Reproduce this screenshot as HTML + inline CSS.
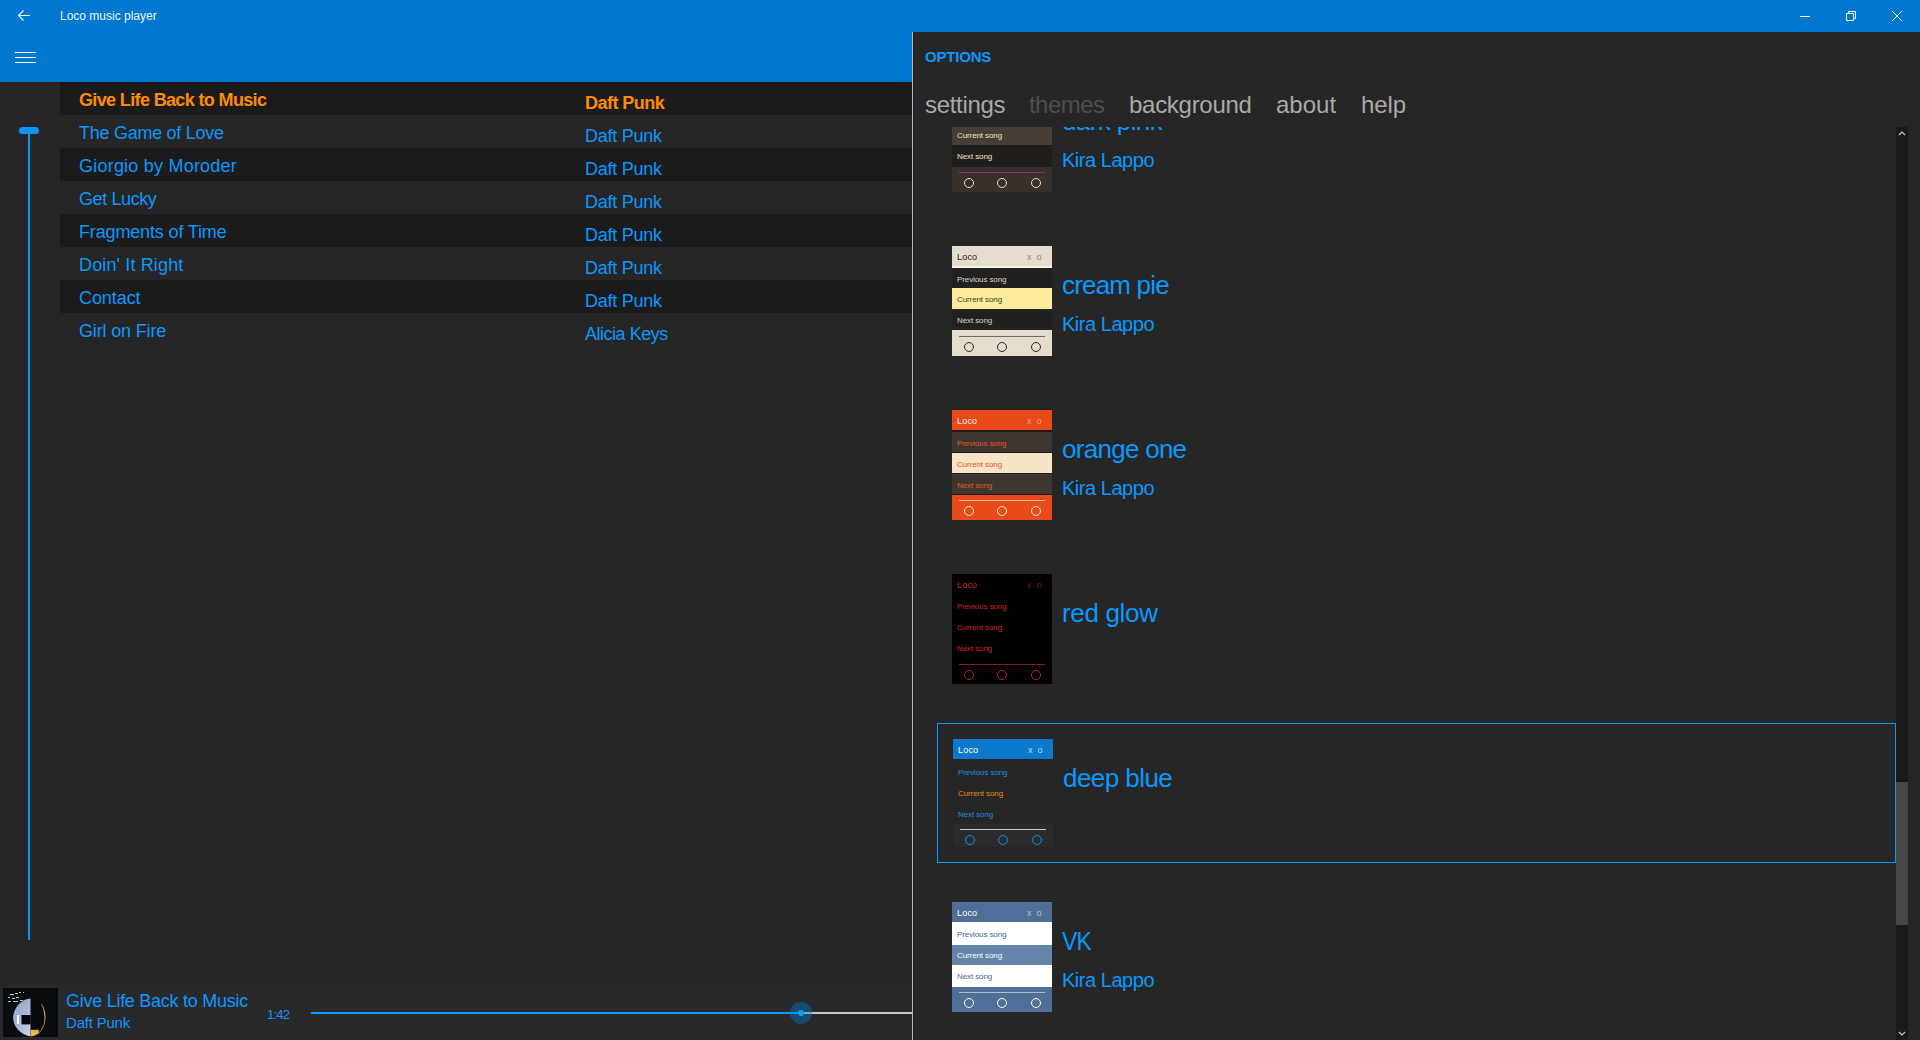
<!DOCTYPE html>
<html><head><meta charset="utf-8">
<style>
*{margin:0;padding:0;box-sizing:border-box}
html,body{width:1920px;height:1040px;overflow:hidden;background:#262626;font-family:"Liberation Sans",sans-serif}
.a{position:absolute;white-space:nowrap;line-height:1}
#tb{position:absolute;left:0;top:0;width:1920px;height:32px;background:#0078cf}
#hdr{position:absolute;left:0;top:32px;width:912px;height:50px;background:#0078cf}
.row{position:absolute;left:60px;width:852px;height:33px}
.row.dk{background:#1b1b1b}
.lt{background:#262626}
.st{position:absolute;left:19px;font-size:18px;color:#0898ff;letter-spacing:-0.4px;line-height:1}
.ar{position:absolute;left:525px;font-size:18px;color:#0898ff;letter-spacing:-0.25px;line-height:1}
.cur .st,.cur .ar{color:#ff8c00;font-weight:bold}
#bottom{position:absolute;left:0;top:985px;width:912px;height:55px;background:#29292b}
#panel{position:absolute;left:912px;top:32px;width:1008px;height:1008px;background:#262626;border-left:1px solid #b5b7c6}

#clip{position:absolute;left:913px;top:127px;width:983px;height:913px;overflow:hidden}
.th{position:absolute;width:100px;height:110px;overflow:hidden}
.th>div{position:absolute;left:0;width:100px}
.tt{top:0;height:21px}.tp{top:21px;height:21px}.tc{top:42px;height:21px}.tn{top:63px;height:21px}.tk{top:84px;height:26px}
.th span{position:absolute;line-height:1;white-space:nowrap}
.tl{left:5px;top:7px;font-size:9px;letter-spacing:0.2px}
.tx{left:75px;top:7px;font-size:9px;letter-spacing:1.2px}
.tp span,.tc span,.tn span{left:5px;top:8px;font-size:8px;letter-spacing:-0.1px}
.tk i{position:absolute;display:block}
.tk .ln{left:7px;top:6px;width:86px;height:1px}
.tk .c{top:12px;width:10px;height:10px;border-radius:50%;border:1px solid}
.c1{left:12px}.c2{left:45px}.c3{left:79px}
.ttl{position:absolute;font-size:26px;line-height:1;color:#0898ff;white-space:nowrap}
.aut{position:absolute;font-size:20px;line-height:1;color:#0898ff;white-space:nowrap;letter-spacing:-0.47px}
.pv{position:absolute;top:61px;font-size:24px;line-height:1;color:#a9a9a9;white-space:nowrap}

.th.dk{background:#1e1a17}
.th.dk .tt{background:#3a322d;color:#efe3cc}.th.dk .tp,.th.dk .tn{background:#221e1b;color:#efe3cc}.th.dk .tc{background:#463e37;color:#efe3cc}.th.dk .tn{height:22px}.th.dk .tk{background:#37302b;top:85px;height:25px}.th.dk .ln{top:5px}.th.dk .c{top:11px}.th.dk .ln{background:#8b2d86}.th.dk .c{border-color:#eadfc4}
.th.cr{background:#232120}.th.cr .tt{background:#e4dccc;color:#1e1e1e;height:22px;border-bottom:2px solid #fbf6dc}.th.cr .tp{top:22px;height:20px}.th.cr .tp span{top:8px}.th.cr .tx{color:#8a8a8a}.th.cr .tp,.th.cr .tn{color:#d8d3c8}.th.cr .tc{background:#fdec9c;color:#3a3a30}.th.cr .tk{background:#e4dccc}.th.cr .ln{background:#6e6a64}.th.cr .c{border-color:#2a2a2a}
.th.or{background:#1e1a17}.th.or .tt{background:#e94a1a;color:#fff3e8;height:20px}.th.or .tx{color:#f0a080}.th.or .tp{top:22px;height:20px}.th.or .tc{top:43px;height:20px}.th.or .tn{top:64px;height:20px}.th.or .tk{top:85px;height:25px}
.th.or .tp,.th.or .tn{background:#3d3530;color:#e8552a}.th.or .tc{background:#f6e5c7;color:#e8552a}.th.or .tk{background:#e94a1a}.th.or .ln{background:#f3b89a;top:5px}.th.or .c{top:11px}.th.or .c{border-color:#f8e8dc}
.th.rg{background:#000;color:#d0242c}.th.rg .tx{color:#701820}.th.rg .ln{background:#8a1d28}.th.rg .c{border-color:#c8202c}
.th.db{background:#262626}.th.db .tt{background:#0a78cc;color:#fff;height:20px}.th.db .tp span,.th.db .tc span,.th.db .tn span{top:9px}.th.db .tk{top:85px;height:23px}.th.db .ln{top:5px}.th.db .c{top:11px}.th.db .tx{color:#c0d8f0}.th.db .tp,.th.db .tn{color:#1a8fe0}.th.db .tc{color:#e38a1a}.th.db .tk{background:#2b2b2e;top:85px;height:23px}.th.db .ln{background:#c8c8c8}.th.db .c{border-color:#1a90e0}
.th.vk .tt{background:#4f6f98;color:#fff;height:20px}.th.vk .tp{top:20px;height:23px}.th.vk .tc{top:43px;height:20px}.th.vk .tn{top:63px;height:22px}.th.vk .tk{top:85px;height:25px}.th.vk .ln{top:5px}.th.vk .c{top:11px}.th.vk .tp span{top:9px}.th.vk .tc span{top:7px}.th.vk .tn span{top:8px}.th.vk .tx{color:#b0c0d8}.th.vk .tp,.th.vk .tn{background:#fff;color:#4a6890}.th.vk .tc{background:#6484aa;color:#fff}.th.vk .tk{background:#4f6f98}.th.vk .ln{background:#a8bcd4}.th.vk .c{border-color:#fff}
</style></head><body>
<div id="tb">
  <svg class="a" style="left:17px;top:9px" width="14" height="14" viewBox="0 0 14 14"><path d="M1.5 6.5H13M6.5 1.5L1.5 6.5L6.5 11.5" stroke="#fff" stroke-width="1.1" fill="none"/></svg>
  <div class="a" style="left:60px;top:10px;font-size:12px;color:#f0f4fa">Loco music player</div>
  <div class="a" style="left:1800px;top:16px;width:10px;height:1px;background:#fff"></div>
  <svg class="a" style="left:1846px;top:11px" width="11" height="11" viewBox="0 0 11 11"><path d="M0.5 2.5H7.5V9.5H0.5Z M2.5 2.5V0.5H9.5V7.5H7.5" stroke="#fff" stroke-width="1" fill="none"/></svg>
  <svg class="a" style="left:1891px;top:10px" width="12" height="12" viewBox="0 0 12 12"><path d="M1 1L11 11M11 1L1 11" stroke="#fff" stroke-width="1" fill="none"/></svg>
</div>
<div id="hdr">
  <div class="a" style="left:15px;top:20px;width:21px;height:1px;background:#fff"></div>
  <div class="a" style="left:15px;top:25px;width:21px;height:1px;background:#fff"></div>
  <div class="a" style="left:15px;top:30px;width:21px;height:1px;background:#fff"></div>
</div>

<div id="list">
  <div class="row dk cur" style="top:82px"><div class="st" style="top:9px;letter-spacing:-0.64px">Give Life Back to Music</div><div class="ar" style="top:12px;letter-spacing:-0.53px">Daft Punk</div></div>
  <div class="row lt" style="top:115px"><div class="st" style="top:9px;letter-spacing:-0.27px">The Game of Love</div><div class="ar" style="top:12px">Daft Punk</div></div>
  <div class="row dk" style="top:148px"><div class="st" style="top:9px;letter-spacing:0.22px">Giorgio by Moroder</div><div class="ar" style="top:12px">Daft Punk</div></div>
  <div class="row lt" style="top:181px"><div class="st" style="top:9px">Get Lucky</div><div class="ar" style="top:12px">Daft Punk</div></div>
  <div class="row dk" style="top:214px"><div class="st" style="top:9px;letter-spacing:-0.15px">Fragments of Time</div><div class="ar" style="top:12px">Daft Punk</div></div>
  <div class="row lt" style="top:247px"><div class="st" style="top:9px;letter-spacing:0.14px">Doin' It Right</div><div class="ar" style="top:12px">Daft Punk</div></div>
  <div class="row dk" style="top:280px"><div class="st" style="top:9px;letter-spacing:-0.07px">Contact</div><div class="ar" style="top:12px">Daft Punk</div></div>
  <div class="row lt" style="top:313px"><div class="st" style="top:9px;letter-spacing:-0.16px">Girl on Fire</div><div class="ar" style="top:12px;letter-spacing:-0.48px">Alicia Keys</div></div>
</div>

<div class="a" style="left:28px;top:130px;width:2px;height:810px;background:#0a96f0"></div>
<div class="a" style="left:19px;top:127px;width:20px;height:7px;border-radius:4px;background:#0a96f0"></div>

<div id="bottom">
  <svg class="a" style="left:3px;top:3px" width="55" height="49" viewBox="0 0 55 49">
    <defs><linearGradient id="sv" x1="0" y1="0" x2="1" y2="1"><stop offset="0" stop-color="#e8f0ff"/><stop offset="0.5" stop-color="#9aaccc"/><stop offset="1" stop-color="#c8d4ea"/></linearGradient>
    <clipPath id="hc"><path d="M27.7 10.5 C18 11 11 20 10 29 C10 38 17 47 27.7 48.5 C36 48 42.5 40 42.5 29 C42.5 18 36 10.5 27.7 10.5Z"/></clipPath></defs>
    <rect width="55" height="49" fill="#090c0e"/>
    <g fill="#e8e8f0" opacity="0.85"><rect x="7" y="6" width="4" height="1.2"/><rect x="12" y="5" width="3" height="1"/><rect x="16" y="4" width="2" height="1"/><rect x="5" y="9" width="2" height="1"/><rect x="9" y="10" width="3" height="1"/><rect x="13" y="9" width="3" height="1"/><rect x="5" y="13" width="3" height="1"/><rect x="10" y="13" width="5" height="1"/><rect x="17" y="12" width="3" height="1"/><rect x="20" y="4" width="1" height="1"/></g>
    <g clip-path="url(#hc)">
      <rect x="0" y="0" width="27.7" height="49" fill="url(#sv)"/>
      <rect x="27.7" y="0" width="30" height="49" fill="#08090b"/>
      <path d="M39 15 C43 22 43.5 32 41.5 38 C40 42 37.5 45 35 47" stroke="#e0a444" stroke-width="2.4" fill="none"/>
      <path d="M34 11 C37 12 39 14 40 17" stroke="#f0f0f0" stroke-width="1.4" fill="none"/>
      <rect x="27.7" y="41.8" width="8" height="7" fill="#e6b84a"/>
      <rect x="18.5" y="27" width="9.2" height="9.4" fill="#06070a"/>
      <rect x="14" y="27" width="2" height="9" fill="#f4f8ff"/>
    </g>
  </svg>
  <div class="a" style="left:66px;top:7px;font-size:18px;color:#0898ff;letter-spacing:-0.27px">Give Life Back to Music</div>
  <div class="a" style="left:66px;top:30px;font-size:15px;color:#0898ff;letter-spacing:-0.2px">Daft Punk</div>
  <div class="a" style="left:267px;top:23px;font-size:13px;color:#0898ff;letter-spacing:-0.8px">1:42</div>
  <div class="a" style="left:311px;top:27px;width:490px;height:2px;background:#0a9cff"></div>
  <div class="a" style="left:801px;top:27px;width:111px;height:2px;background:#c8c8cc"></div>
  <div class="a" style="left:790px;top:17px;width:22px;height:22px;border-radius:50%;background:rgba(0,125,215,0.40)"></div>
  <div class="a" style="left:798px;top:25px;width:6px;height:6px;border-radius:50%;background:#0a9cff"></div>
</div>

<div id="panel">
  <div class="a" style="left:12px;top:17px;font-size:15px;font-weight:bold;color:#0898ff;letter-spacing:-0.2px">OPTIONS</div>
  <div class="pv" style="left:12px;letter-spacing:-0.3px">settings</div>
  <div class="pv" style="left:116px;letter-spacing:-0.55px;color:#4e4e4e">themes</div>
  <div class="pv" style="left:216px;letter-spacing:-0.28px">background</div>
  <div class="pv" style="left:363px;letter-spacing:0px">about</div>
  <div class="pv" style="left:448px;letter-spacing:-0.1px">help</div>
</div>
<div id="clip">
<div class="th dk" style="left:39px;top:-45px">
  <div class="tt"><span class="tl">Loco</span><span class="tx">x o</span></div>
  <div class="tp"><span>Previous song</span></div>
  <div class="tc"><span>Current song</span></div>
  <div class="tn"><span>Next song</span></div>
  <div class="tk"><i class="ln"></i><i class="c c1"></i><i class="c c2"></i><i class="c c3"></i></div>
</div>
<div class="ttl" style="left:149px;top:-19px;letter-spacing:-0.6px">dark pink</div>
<div class="aut" style="left:149px;top:23px">Kira Lappo</div>
<div class="th cr" style="left:39px;top:119px">
  <div class="tt"><span class="tl">Loco</span><span class="tx">x o</span></div>
  <div class="tp"><span>Previous song</span></div>
  <div class="tc"><span>Current song</span></div>
  <div class="tn"><span>Next song</span></div>
  <div class="tk"><i class="ln"></i><i class="c c1"></i><i class="c c2"></i><i class="c c3"></i></div>
</div>
<div class="ttl" style="left:149px;top:145px;letter-spacing:-0.81px">cream pie</div>
<div class="aut" style="left:149px;top:187px">Kira Lappo</div>
<div class="th or" style="left:39px;top:283px">
  <div class="tt"><span class="tl">Loco</span><span class="tx">x o</span></div>
  <div class="tp"><span>Previous song</span></div>
  <div class="tc"><span>Current song</span></div>
  <div class="tn"><span>Next song</span></div>
  <div class="tk"><i class="ln"></i><i class="c c1"></i><i class="c c2"></i><i class="c c3"></i></div>
</div>
<div class="ttl" style="left:149px;top:309px;letter-spacing:-0.72px">orange one</div>
<div class="aut" style="left:149px;top:351px">Kira Lappo</div>
<div class="th rg" style="left:39px;top:447px">
  <div class="tt"><span class="tl">Loco</span><span class="tx">x o</span></div>
  <div class="tp"><span>Previous song</span></div>
  <div class="tc"><span>Current song</span></div>
  <div class="tn"><span>Next song</span></div>
  <div class="tk"><i class="ln"></i><i class="c c1"></i><i class="c c2"></i><i class="c c3"></i></div>
</div>
<div class="ttl" style="left:149px;top:473px;letter-spacing:-0.33px">red glow</div>
<div class="th db" style="left:40px;top:612px">
  <div class="tt"><span class="tl">Loco</span><span class="tx">x o</span></div>
  <div class="tp"><span>Previous song</span></div>
  <div class="tc"><span>Current song</span></div>
  <div class="tn"><span>Next song</span></div>
  <div class="tk"><i class="ln"></i><i class="c c1"></i><i class="c c2"></i><i class="c c3"></i></div>
</div>
<div class="ttl" style="left:150px;top:638px;letter-spacing:-0.56px">deep blue</div>
<div class="th vk" style="left:39px;top:775px">
  <div class="tt"><span class="tl">Loco</span><span class="tx">x o</span></div>
  <div class="tp"><span>Previous song</span></div>
  <div class="tc"><span>Current song</span></div>
  <div class="tn"><span>Next song</span></div>
  <div class="tk"><i class="ln"></i><i class="c c1"></i><i class="c c2"></i><i class="c c3"></i></div>
</div>
<div class="ttl" style="left:149px;top:801px;letter-spacing:-1px;transform:scaleX(0.88);transform-origin:0 0">VK</div>
<div class="aut" style="left:149px;top:843px">Kira Lappo</div>
<div class="a" style="left:24px;top:596px;width:959px;height:140px;border:1px solid #0898ff"></div>
</div>

<div class="a" style="left:1896px;top:127px;width:12px;height:913px;background:#1a1a1a"></div>
<div class="a" style="left:1896px;top:782px;width:12px;height:143px;background:#474747"></div>
<svg class="a" style="left:1898px;top:130px" width="8" height="6" viewBox="0 0 8 6"><path d="M1 5L4 2L7 5" stroke="#c8c8c8" stroke-width="1.2" fill="none"/></svg>
<svg class="a" style="left:1898px;top:1031px" width="8" height="6" viewBox="0 0 8 6"><path d="M1 1L4 4L7 1" stroke="#c8c8c8" stroke-width="1.2" fill="none"/></svg>
</body></html>
